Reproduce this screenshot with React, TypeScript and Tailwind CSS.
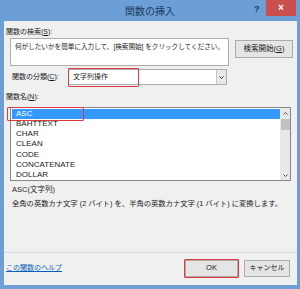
import React from "react";

const jp = { fontFamily: '"Liberation Sans", "Noto Sans CJK JP", sans-serif' };

export default function App() {
  const items = ["ASC", "BAHTTEXT", "CHAR", "CLEAN", "CODE", "CONCATENATE", "DOLLAR"];
  return (
    <div
      className="w-[300px] h-[289px] bg-[#6b9fd6] flex flex-col overflow-hidden text-[#1a1a1a]"
      style={jp}
    >
      {/* title bar */}
      <div className="relative h-[21px] flex items-center justify-center">
        <span className="text-[10px] text-[#1e3a5f] mt-[2px]">関数の挿入</span>
        <span className="absolute left-[254px] top-[3px] text-[9px] font-bold text-[#1e3a5f]">?</span>
        <div className="absolute left-[266px] top-0 w-[30px] h-[16px] bg-[#c9504c] flex items-center justify-center text-white text-[10px] font-bold leading-none">
          ×
        </div>
      </div>
      {/* content */}
      <div className="relative flex-1 ml-[4px] mr-[3px] mb-[4px] bg-[#f0f0f0] flex flex-col">
        <div className="text-[7px] leading-[9px] ml-[2px] mt-[6px]">関数の検索(<u>S</u>):</div>
        <div className="flex mt-[2px] ml-[6px] items-start">
          <div className="w-[219px] h-[28px] bg-white border border-[#adadad] text-[6.6px] leading-[9px] pl-[4px] pt-[3px] whitespace-nowrap overflow-hidden">
            何がしたいかを簡単に入力して、[検索開始] をクリックしてください。
          </div>
          <div className="ml-[6px] mt-[2px] w-[58px] h-[18px] bg-[#e5e5e5] border border-[#acacac] flex items-center justify-center text-[7.5px]">
            検索開始(<u>G</u>)
          </div>
        </div>
        <div className="flex items-center mt-[3px] ml-[8px] h-[16px]">
          <div className="w-[56px] text-[7px]">関数の分類(<u>C</u>):</div>
          <div className="relative w-[159px] h-[16px] bg-white border border-[#adadad] flex items-center">
            <span className="text-[7px] pl-[4px]">文字列操作</span>
            <div className="absolute right-0 top-0 w-[10px] h-[14px] bg-[#e8e8e8] border-l border-[#c8c8c8] flex items-center justify-center">
              <svg width="5" height="3" viewBox="0 0 5 3">
                <path d="M0.5 0.5 L2.5 2.5 L4.5 0.5" stroke="#333" strokeWidth="1" fill="none" />
              </svg>
            </div>
            <div className="absolute left-[-1px] top-[-2px] w-[71px] h-[19px] border-[1.5px] border-[#e0393e] rounded-[1px]" />
          </div>
        </div>
        <div className="text-[7px] leading-[9px] ml-[2px] mt-[7px]">関数名(<u>N</u>):</div>
        <div className="relative mt-[6px] ml-[6px] w-[281px] h-[74px] bg-white border border-[#828790] flex">
          <div className="flex-1 flex flex-col pt-[1px] pl-[1px]">
            {items.map((it, i) => (
              <div
                key={it}
                className={
                  "h-[10.3px] flex items-center pl-[4px] text-[8px] leading-none " +
                  (i === 0 ? "bg-[#3399ff] text-white" : "text-[#1a1a1a]")
                }
                style={{ fontFamily: '"Liberation Sans", sans-serif' }}
              >
                {it}
              </div>
            ))}
          </div>
          <div className="w-[10px] h-full bg-[#e8e8e8] flex flex-col items-center">
            <div className="h-[10px] flex items-center justify-center">
              <svg width="5" height="3" viewBox="0 0 5 3">
                <path d="M0.5 2.5 L2.5 0.5 L4.5 2.5" stroke="#555" strokeWidth="1" fill="none" />
              </svg>
            </div>
            <div className="w-[9px] h-[11px] bg-[#c2c2c2] mt-[1px]" />
            <div className="flex-1" />
            <div className="h-[10px] flex items-center justify-center">
              <svg width="5" height="3" viewBox="0 0 5 3">
                <path d="M0.5 0.5 L2.5 2.5 L4.5 0.5" stroke="#555" strokeWidth="1" fill="none" />
              </svg>
            </div>
          </div>
          <div className="absolute left-[-4px] top-[-1px] w-[77px] h-[14px] border-[1.5px] border-[#e0393e] rounded-[1px]" />
        </div>
        <div className="text-[7.5px] leading-[10px] ml-[8px] mt-[4px]">ASC(文字列)</div>
        <div className="text-[7.3px] leading-[10px] ml-[8px] mt-[4px] whitespace-nowrap">
          全角の英数カナ文字 (2 バイト) を、半角の英数カナ文字 (1 バイト) に変換します。
        </div>
        <div className="flex-1" />
        <div className="h-px bg-[#dadada]" />
        <div className="flex items-center h-[32px] pb-[2px]">
          <span className="ml-[2px] text-[7px] text-[#0b5fb8] underline flex-1">この関数のヘルプ</span>
          <div className="relative w-[53px] h-[17px] bg-[#e5e5e5] border border-[#acacac] flex items-center justify-center text-[7.5px]">
            OK
            <div className="absolute inset-[-2px] border-[1.5px] border-[#e0393e] rounded-[1px]" />
          </div>
          <div className="ml-[6px] mr-[7px] w-[46px] h-[17px] bg-[#e5e5e5] border border-[#acacac] flex items-center justify-center text-[7px]">
            キャンセル
          </div>
        </div>
      </div>
    </div>
  );
}
